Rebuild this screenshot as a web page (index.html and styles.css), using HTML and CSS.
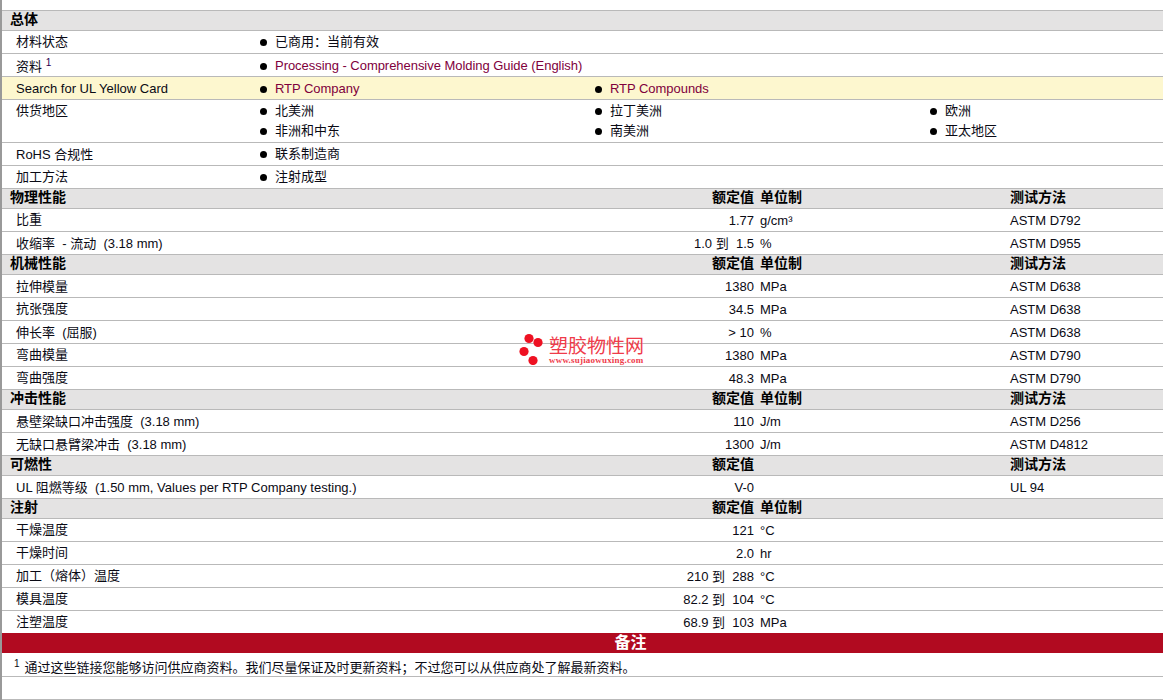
FILE: index.html
```html
<!DOCTYPE html>
<html lang="zh">
<head>
<meta charset="utf-8">
<title>RTP</title>
<link rel="stylesheet" href="styles.css">
</head>
<body>
<main class="sheet">
  <div class="head gen-head">总体</div>
  <div class="row gen"><div class="label cjk">材料状态</div><div class="item wide cjk"><i class="dot"></i>已商用：当前有效</div></div>
  <div class="row gen"><div class="label"><span class="drop">资料</span> <sup>1</sup></div><div class="item wide link"><i class="dot"></i>Processing - Comprehensive Molding Guide (English)</div></div>
  <div class="row gen yellow"><div class="label">Search for UL Yellow Card</div><div class="item link"><i class="dot"></i>RTP Company</div><div class="item link"><i class="dot"></i>RTP Compounds</div></div>
  <div class="row gen tall"><div class="label cjk">供货地区</div>
    <div class="item cjk"><i class="dot"></i>北美洲</div><div class="item cjk"><i class="dot"></i>拉丁美洲</div><div class="item cjk"><i class="dot"></i>欧洲</div>
    <div class="item second cjk"><i class="dot"></i>非洲和中东</div><div class="item cjk"><i class="dot"></i>南美洲</div><div class="item cjk"><i class="dot"></i>亚太地区</div>
  </div>
  <div class="row gen"><div class="label">RoHS 合规性</div><div class="item wide cjk"><i class="dot"></i>联系制造商</div></div>
  <div class="row gen"><div class="label cjk">加工方法</div><div class="item wide cjk"><i class="dot"></i>注射成型</div></div>

  <div class="head prop"><div>物理性能</div><div class="val">额定值</div><div class="unit">单位制</div><div>测试方法</div></div>
  <div class="row prop"><div class="label cjk">比重</div><div class="val">1.77</div><div class="unit">g/cm³</div><div>ASTM D792</div></div>
  <div class="row prop"><div class="label">收缩率 &nbsp;- 流动 &nbsp;(3.18 mm)</div><div class="val">1.0 到 &nbsp;1.5</div><div class="unit">%</div><div>ASTM D955</div></div>

  <div class="head prop"><div>机械性能</div><div class="val">额定值</div><div class="unit">单位制</div><div>测试方法</div></div>
  <div class="row prop"><div class="label">拉伸模量</div><div class="val">1380</div><div class="unit">MPa</div><div>ASTM D638</div></div>
  <div class="row prop"><div class="label cjk">抗张强度</div><div class="val">34.5</div><div class="unit">MPa</div><div>ASTM D638</div></div>
  <div class="row prop"><div class="label">伸长率 &nbsp;(屈服)</div><div class="val">&gt; 10</div><div class="unit">%</div><div>ASTM D638</div></div>
  <div class="row prop"><div class="label cjk">弯曲模量</div><div class="val">1380</div><div class="unit">MPa</div><div>ASTM D790</div></div>
  <div class="row prop"><div class="label cjk">弯曲强度</div><div class="val">48.3</div><div class="unit">MPa</div><div>ASTM D790</div></div>

  <div class="head prop"><div>冲击性能</div><div class="val">额定值</div><div class="unit">单位制</div><div>测试方法</div></div>
  <div class="row prop"><div class="label">悬壁梁缺口冲击强度 &nbsp;(3.18 mm)</div><div class="val">110</div><div class="unit">J/m</div><div>ASTM D256</div></div>
  <div class="row prop"><div class="label">无缺口悬臂梁冲击 &nbsp;(3.18 mm)</div><div class="val">1300</div><div class="unit">J/m</div><div>ASTM D4812</div></div>

  <div class="head prop"><div>可燃性</div><div class="val">额定值</div><div class="unit"></div><div>测试方法</div></div>
  <div class="row prop"><div class="label">UL 阻燃等级 &nbsp;(1.50 mm, Values per RTP Company testing.)</div><div class="val">V-0</div><div class="unit"></div><div>UL 94</div></div>

  <div class="head prop"><div>注射</div><div class="val">额定值</div><div class="unit">单位制</div><div></div></div>
  <div class="row prop"><div class="label cjk">干燥温度</div><div class="val">121</div><div class="unit">°C</div><div></div></div>
  <div class="row prop"><div class="label cjk">干燥时间</div><div class="val">2.0</div><div class="unit">hr</div><div></div></div>
  <div class="row prop"><div class="label cjk">加工（熔体）温度</div><div class="val">210 到 &nbsp;288</div><div class="unit">°C</div><div></div></div>
  <div class="row prop"><div class="label cjk">模具温度</div><div class="val">82.2 到 &nbsp;104</div><div class="unit">°C</div><div></div></div>
  <div class="row prop last"><div class="label cjk">注塑温度</div><div class="val">68.9 到 &nbsp;103</div><div class="unit">MPa</div><div></div></div>

  <div class="notes-title">备注</div>
  <div class="row note"><sup>1</sup><span>通过这些链接您能够访问供应商资料。我们尽量保证及时更新资料；不过您可以从供应商处了解最新资料。</span></div>
  <div class="row blank"></div>

  <div class="logo">
    <svg class="logo-dots" width="28" height="32" viewBox="0 0 28 32" aria-hidden="true">
      <circle cx="10" cy="5.5" r="4.6"/><circle cx="19" cy="9.5" r="4.6"/><circle cx="5" cy="18.5" r="4.6"/><circle cx="14" cy="27.5" r="4.6"/>
    </svg>
    <div class="logo-text">
      <div class="logo-cn">塑胶物性网</div>
      <div class="logo-url">www.sujiaowuxing.com</div>
    </div>
  </div>
</main>
</body>
</html>
```
FILE: styles.css
```css
html, body {
  margin: 0;
  padding: 0;
  background: #fff;
  overflow: hidden;
}
.sheet {
  position: relative;
  box-sizing: border-box;
  width: 1163px;
  height: 700px;
  padding-top: 10px;
  border-left: 2px solid #999;
  font: 13px/22px "Liberation Sans", "Noto Sans CJK SC", sans-serif;
  color: #0a0a14;
}
.head {
  box-sizing: border-box;
  height: 20px;
  line-height: 17px;
  background: #e4e3e3;
  border-bottom: 1px solid #b9b9b9;
  padding-left: 8px;
  font-size: 14px;
  font-weight: 700;
  color: #000;
}
.gen-head {
  height: 21px;
  border-top: 1px solid #b9b9b9;
}
.row {
  box-sizing: border-box;
  height: 23px;
  border-bottom: 1px solid #b9b9b9;
}
.gen {
  display: grid;
  grid-template-columns: 256px 335px 335px 1fr;
  grid-auto-rows: 20px;
  padding-top: 1px;
}
.tall {
  height: 43px;
}
.yellow {
  background: #fdf7cf;
}
.label {
  padding-left: 14px;
}
.cjk {
  margin-top: -1px;
}
.drop {
  vertical-align: -1px;
}
.item {
  display: flex;
  align-items: center;
  height: 22px;
}
.wide {
  grid-column: span 3;
}
.second {
  grid-column: 2;
}
.link {
  color: #80003c;
  letter-spacing: -0.04px;
}
.dot {
  width: 7px;
  height: 7px;
  margin: 0 8px 0 2px;
  border-radius: 50%;
  background: #000;
}
.prop {
  display: grid;
  grid-template-columns: 544px 200px 256px 1fr;
}
.row.prop {
  grid-template-columns: 552px 200px 256px 1fr;
  padding-top: 1px;
}
.val {
  text-align: right;
}
.unit {
  padding-left: 6px;
}
.row.last {
  height: 22px;
  border-bottom: 0;
}
sup {
  font-size: 10px;
  line-height: 0;
  color: #2a0050;
  vertical-align: 4px;
}
.notes-title {
  box-sizing: border-box;
  height: 20px;
  padding-left: 96px;
  line-height: 19px;
  background: #b10a20;
  color: #fff;
  text-align: center;
  font-family: "Liberation Serif", "Noto Sans CJK SC", serif;
  font-size: 16px;
  font-weight: 700;
}
.row.note {
  height: 24px;
  padding: 4px 0 0 12px;
}
.note sup {
  margin-right: 5px;
  vertical-align: 5px;
  color: #0a0a14;
}
.blank {
  height: 23px;
}
.logo {
  position: absolute;
  left: 517px;
  top: 333px;
  display: flex;
  gap: 2px;
  color: #ef3b4a;
}
.logo-dots {
  fill: #ee1122;
}
.logo-text {
  padding-top: 5px;
}
.logo-cn {
  font-size: 19px;
  line-height: 18px;
  white-space: nowrap;
}
.logo-url {
  font: 700 9px/8px "Liberation Serif", serif;
  letter-spacing: 0.2px;
  white-space: nowrap;
}
```
